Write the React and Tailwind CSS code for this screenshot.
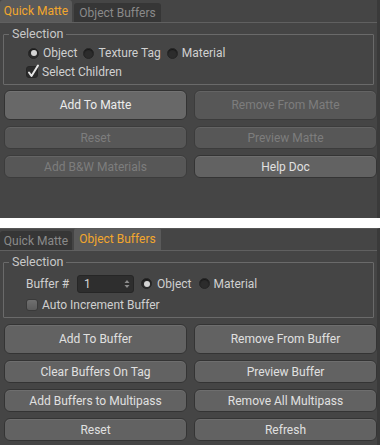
import React from "react";

const font = { fontFamily: "Roboto, 'Liberation Sans', sans-serif" };

function Tab({ label, active }) {
  return (
    <div
      className={`flex items-center justify-center rounded-t-[3px] text-[12px] ${
        active
          ? "h-[22px] bg-[#5a5a5a] text-[#f2a72d]"
          : "h-[19px] bg-[#363636] text-[#8a8a8a]"
      }`}
    >
      {label}
    </div>
  );
}

function Radio({ on }) {
  return (
    <div className="w-[11px] h-[11px] rounded-full bg-[#2c2c2c] border border-[#262626] shadow-[inset_0_1px_1px_rgba(0,0,0,0.5)] flex items-center justify-center">
      {on && <div className="w-[6px] h-[6px] rounded-full bg-[#d4d4d4]" />}
    </div>
  );
}

function Check({ on }) {
  if (!on)
    return (
      <div className="w-[12px] h-[12px] rounded-[3px] bg-gradient-to-b from-[#707070] to-[#5c5c5c] border border-[#3a3a3a]" />
    );
  return (
    <div className="relative w-[12px] h-[12px] rounded-[3px] bg-[#2b2b2b] border border-[#262626]">
      <svg className="absolute -top-[3px] left-[0px]" width="13" height="14" viewBox="0 0 13 14">
        <path d="M2 8.5 L4.5 12 L11 1.5" fill="none" stroke="#e6e6e6" strokeWidth="2" strokeLinecap="round" strokeLinejoin="round" />
      </svg>
    </div>
  );
}

function Btn({ label, off, tall, strong }) {
  return (
    <div
      className={`flex items-center justify-center rounded-[6px] border text-[12px] shadow-[inset_0_1px_0_rgba(255,255,255,0.08)] ${
        tall ? "h-[30px]" : "h-[23px]"
      } ${
        off
          ? "bg-[#575757] border-[#3c3c3c] text-[#7d7d7d]"
          : strong
          ? "bg-[#686868] border-[#333333] text-[#ececec]"
          : "bg-[#626262] border-[#343434] text-[#e0e0e0]"
      }`}
    >
      {label}
    </div>
  );
}

function Group({ children }) {
  return (
    <fieldset className="ml-[3px] mr-[3px] border border-[#6a6a6a] rounded-[1px] pl-[24px] pb-[4px]">
      <legend className="-ml-[19px] px-[3px] text-[12.5px] leading-[14px] text-[#c8c8c8]">Selection</legend>
      {children}
    </fieldset>
  );
}

export default function App() {
  return (
    <div className="w-[380px] h-[445px] bg-white flex flex-col text-[#d0d0d0]" style={font}>
      {/* quick matte */}
      <div className="h-[218px] bg-[#454545] border-r-[3px] border-[#3a3a3a] flex flex-col">
        <div className="flex items-end h-[23px] border-b border-[#606060]">
          <div className="w-[72px]"><Tab label="Quick Matte" active /></div>
          <div className="w-[87px] ml-[2px]"><Tab label="Object Buffers" /></div>
        </div>
        <div className="mt-[4px]">
          <Group>
            <div className="flex items-center h-[16px] mt-[4px] text-[12px]">
              <Radio on />
              <span className="ml-[4px] mr-[6px]">Object</span>
              <Radio />
              <span className="ml-[4px] mr-[6px]">Texture Tag</span>
              <Radio />
              <span className="ml-[4px]">Material</span>
            </div>
            <div className="flex items-center h-[16px] mt-[3px] -ml-[2px] text-[12px]">
              <Check on />
              <span className="ml-[4px]">Select Children</span>
            </div>
          </Group>
        </div>
        <div className="grid grid-cols-2 gap-x-[7px] gap-y-[6px] mt-[5px] ml-[4px]">
          <Btn label="Add To Matte" tall strong />
          <Btn label="Remove From Matte" tall off />
          <Btn label="Reset" off />
          <Btn label="Preview Matte" off />
          <Btn label="Add B&W Materials" off />
          <Btn label="Help Doc" />
        </div>
      </div>

      <div className="h-[10px]" />

      {/* object buffers */}
      <div className="flex-1 bg-[#454545] border-t border-[#555555] border-r-[3px] border-r-[#3a3a3a] flex flex-col">
        <div className="flex items-end h-[22px] border-b border-[#606060]">
          <div className="w-[72px]"><Tab label="Quick Matte" /></div>
          <div className="w-[87px] ml-[2px]"><Tab label="Object Buffers" active /></div>
        </div>
        <div className="mt-[4px]">
          <Group>
            <div className="flex items-center h-[19px] mt-[5px] -ml-[2px] text-[12px]">
              <span>Buffer #</span>
              <div className="ml-[8px] w-[57px] h-[18px] rounded-[3px] bg-[#2e2e2e] border border-[#262626] flex items-center justify-between pl-[6px] pr-[3px] text-[#d6d6d6]">
                <span>1</span>
                <svg width="6" height="10" viewBox="0 0 6 10">
                  <path d="M3 1 L5.5 4 H0.5 Z M3 9 L5.5 6 H0.5 Z" fill="#8c8c8c" />
                </svg>
              </div>
              <div className="ml-[7px]"><Radio on /></div>
              <span className="ml-[5px] mr-[7px]">Object</span>
              <Radio />
              <span className="ml-[4px]">Material</span>
            </div>
            <div className="flex items-center h-[16px] mt-[4px] -ml-[2px] text-[12px]">
              <Check />
              <span className="ml-[4px]">Auto Increment Buffer</span>
            </div>
          </Group>
        </div>
        <div className="grid grid-cols-2 gap-x-[7px] gap-y-[6px] mt-[6px] ml-[4px]">
          <Btn label="Add To Buffer" tall />
          <Btn label="Remove From Buffer" tall />
          <Btn label="Clear Buffers On Tag" />
          <Btn label="Preview Buffer" />
          <Btn label="Add Buffers to Multipass" />
          <Btn label="Remove All Multipass" />
          <Btn label="Reset" />
          <Btn label="Refresh" />
        </div>
      </div>
    </div>
  );
}
